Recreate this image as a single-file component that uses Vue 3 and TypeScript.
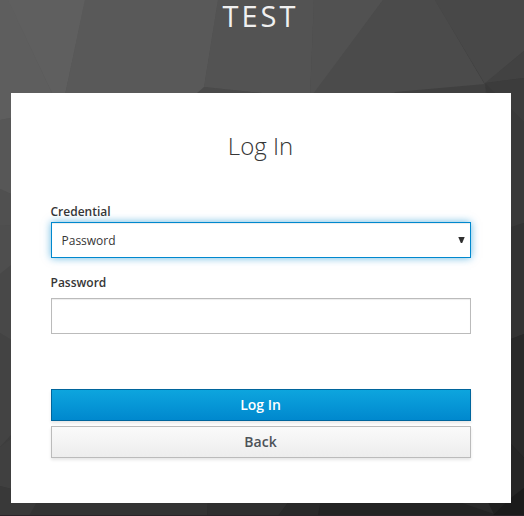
<script setup lang="ts">
import { ref } from 'vue'

interface Facet {
  points: string
  fill: string
}

const credential = ref('password')
const password = ref('')

const facets: Facet[] = [
  { points: '0,0 8,0 52,93 52,110 0,120', fill: '#5e5e5e' },
  { points: '8,0 85,0 64,100 52,93', fill: '#5f5f5f' },
  { points: '85,0 218,0 204,88 195,100 64,100', fill: '#595959' },
  { points: '218,0 314,0 310,100 262,93 204,87', fill: '#535353' },
  { points: '314,0 383,0 313,96 310,96', fill: '#515151' },
  { points: '383,0 435,0 485,85 390,93 315,100 313,94', fill: '#4b4b4b' },
  { points: '435,0 524,0 524,51 485,84', fill: '#484848' },
  { points: '485,83 524,51 524,78', fill: '#424242' },
  { points: '204,87 262,93 262,104 190,104 197,93', fill: '#4a4a4a' },
  { points: '395,92 485,84 486,104 390,104', fill: '#404040' },
  { points: '485,83 524,78 524,122', fill: '#3c3c3c' },
  { points: '485,83 524,122 524,223 511,228', fill: '#393939' },
  { points: '0,120 20,116 20,198 0,189', fill: '#575757' },
  { points: '0,189 20,198 20,224 0,226', fill: '#505050' },
  { points: '0,226 20,224 20,258 0,274', fill: '#4e4e4e' },
  { points: '0,274 20,258 20,345 0,333', fill: '#484848' },
  { points: '0,333 20,345 20,425 0,447', fill: '#434343' },
  { points: '0,447 20,432 20,491 0,486', fill: '#404040' },
  { points: '0,486 20,491 38,503 29,516 0,516', fill: '#393939' },
  { points: '38,500 208,500 207,516 29,516', fill: '#333333' },
  { points: '208,500 290,500 278,516 207,516', fill: '#2f2f2f' },
  { points: '290,500 321,500 318,516 278,516', fill: '#292929' },
  { points: '321,500 462,500 494,514 494,516 318,516', fill: '#232323' },
  { points: '511,227 524,223 524,334 511,339', fill: '#333333' },
  { points: '511,339 524,334 524,458 511,444', fill: '#292929' },
  { points: '511,444 524,458 524,488 511,498', fill: '#252525' },
  { points: '462,503 488,502 494,514', fill: '#2a2a2a' },
  { points: '511,498 524,488 524,516 492,516', fill: '#1b1b1b' },
  { points: '488,502 506,502 494,514', fill: '#202020' },
]
</script>

<template>
  <main class="page">
    <svg class="backdrop" viewBox="0 0 524 516" preserveAspectRatio="none" aria-hidden="true">
      <defs>
        <linearGradient id="shade" x1="0" y1="0" x2="0.75" y2="1">
          <stop offset="0" stop-color="#606060" />
          <stop offset="1" stop-color="#202020" />
        </linearGradient>
      </defs>
      <rect width="524" height="516" fill="url(#shade)" />
      <polygon v-for="(facet, i) in facets" :key="i" :points="facet.points" :fill="facet.fill" />
      <rect y="515" width="524" height="1" fill="#2b2329" />
    </svg>

    <header class="realm">TEST</header>

    <section class="card">
      <h1 class="title">Log In</h1>
      <form @submit.prevent>
        <label class="label" for="credential">Credential</label>
        <div class="select-wrap">
          <select id="credential" v-model="credential" class="control select">
            <option value="password">Password</option>
          </select>
          <svg class="caret" viewBox="0 0 7 6" aria-hidden="true"><path d="M0.3 0h6.4L4.2 6H2.8z" /></svg>
        </div>
        <label class="label password-label" for="password">Password</label>
        <input id="password" v-model="password" class="control" type="password" />
        <div class="actions">
          <button class="button primary" type="submit">Log In</button>
          <button class="button" type="button">Back</button>
        </div>
      </form>
    </section>
  </main>
</template>

<style>
body {
  margin: 0;
  overflow: hidden;
}
</style>

<style scoped>
.page {
  position: relative;
  box-sizing: border-box;
  height: 516px;
  padding: 0 13.5px 13px 10.5px;
  font-family: "Open Sans", "Liberation Sans", sans-serif;
  font-size: 12px;
  color: #363636;
}

.backdrop {
  position: absolute;
  inset: 0;
  width: 100%;
  height: 100%;
}

.realm {
  position: relative;
  height: 93px;
  font-size: 29px;
  line-height: 32px;
  letter-spacing: 3px;
  text-align: center;
  color: #f0f0f0;
}

.card {
  position: relative;
  box-sizing: border-box;
  height: 410px;
  padding: 36px 40px 0;
  background: #fff;
}

.title {
  margin: 0 0 40px;
  font-size: 24px;
  font-weight: 300;
  line-height: 34px;
  text-align: center;
}

.label {
  display: block;
  margin-bottom: 1px;
  font-weight: 600;
  line-height: 18px;
}

.password-label {
  margin-top: 16px;
  margin-bottom: 6px;
}

.select-wrap {
  position: relative;
}

.control {
  display: block;
  box-sizing: border-box;
  width: 100%;
  height: 36px;
  margin: 0;
  padding: 0 9px;
  border: 1px solid #bbb;
  border-radius: 0;
  outline: none;
  background: #fff;
  box-shadow: inset 0 1px 1px rgba(3, 3, 3, 0.075);
  font: inherit;
  color: #363636;
}

.select {
  appearance: none;
  padding: 0 10px;
  border-color: #0088ce;
  box-shadow: inset 0 1px 1px rgba(3, 3, 3, 0.075), 0 0 8px rgba(0, 136, 206, 0.6);
}

.caret {
  position: absolute;
  top: 15px;
  right: 5.5px;
  width: 7px;
  height: 6px;
  fill: #303030;
}

.actions {
  display: flex;
  flex-direction: column;
  gap: 5px;
  margin-top: 55px;
}

.button {
  box-sizing: border-box;
  height: 32px;
  padding: 0;
  border: 1px solid #bbb;
  background: linear-gradient(#fafafa, #ededed);
  box-shadow: 0 2px 3px rgba(3, 3, 3, 0.1);
  font: 600 14px/28px "Open Sans", sans-serif;
  color: #4d5258;
}

.primary {
  border-color: #00659c;
  background: linear-gradient(#0da5de, #0088ce);
  color: #fff;
}
</style>
